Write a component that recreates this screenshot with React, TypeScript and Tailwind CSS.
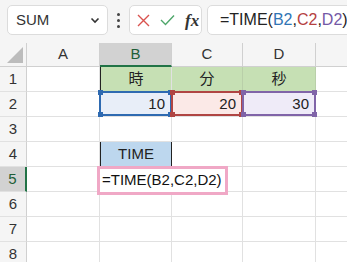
import React from 'react';

const font = { fontFamily: '"Liberation Sans", "Noto Sans CJK JP", sans-serif' };

const Corner = ({ pos, color }: { pos: string; color: string }) => (
  <div className={`absolute w-[5px] h-[5px] ${pos} ${color}`} />
);

const RangeBox = ({ border, fill }: { border: string; fill: string }) => (
  <div className={`absolute -left-[1px] -top-[1px] right-[-1px] bottom-0 border-2 ${border}`}>
    <Corner pos="-left-[3px] -top-[3px]" color={fill} />
    <Corner pos="-right-[3px] -top-[3px]" color={fill} />
    <Corner pos="-left-[3px] -bottom-[3px]" color={fill} />
    <Corner pos="-right-[3px] -bottom-[3px]" color={fill} />
  </div>
);

const Cell = ({ className = '', children }: { className?: string; children?: React.ReactNode }) => (
  <div className={`border-r border-b border-[#e1e1e1] flex items-center text-[15px] text-[#222] ${className}`}>{children}</div>
);

const RowHead = ({ n, active }: { n: number; active?: boolean }) => (
  <div
    className={`flex items-center justify-center text-[15px] border-b border-[#e1e1e1] ${
      active ? 'bg-[#d2d2d2] text-[#1e5e38] border-r-2 border-r-[#217346]' : 'bg-[#f5f5f5] text-[#333] border-r border-r-[#d0d0d0]'
    }`}
  >
    {n}
  </div>
);

export default function App() {
  return (
    <div className="w-[347px] h-[262px] overflow-hidden bg-[#f5f5f5] select-none" style={font}>
      {/* formula bar */}
      <div className="h-[43px] flex items-start pt-[5px] pl-[7px]">
        <div className="w-[101px] h-[30px] shrink-0 bg-white border border-[#dcdcdc] rounded-[5px] flex items-center justify-between pl-[8px] pr-[7px]">
          <span className="text-[15px] text-[#333]">SUM</span>
          <svg width="10" height="7" viewBox="0 0 10 7">
            <path d="M1.5 1.5 L5 5 L8.5 1.5" fill="none" stroke="#333" strokeWidth="1.6" />
          </svg>
        </div>
        <div className="w-[21px] h-[30px] shrink-0 flex flex-col items-center justify-center gap-[3px]">
          <div className="w-[3px] h-[3px] bg-[#444] rounded-full" />
          <div className="w-[3px] h-[3px] bg-[#444] rounded-full" />
          <div className="w-[3px] h-[3px] bg-[#444] rounded-full" />
        </div>
        <div className="w-[73px] h-[30px] shrink-0 bg-white border border-[#dcdcdc] rounded-[5px] flex items-center pl-[7px] gap-[10px]">
          <svg width="13" height="13" viewBox="0 0 13 13">
            <path d="M1 1 L12 12 M12 1 L1 12" stroke="#d9534f" strokeWidth="1.4" />
          </svg>
          <svg width="15" height="12" viewBox="0 0 15 12">
            <path d="M1 6 L5.5 10.5 L14 1.5" fill="none" stroke="#4ea66a" strokeWidth="1.4" />
          </svg>
          <span className="text-[17px] italic font-bold text-[#333] leading-none" style={{ fontFamily: '"Liberation Serif", serif' }}>
            fx
          </span>
        </div>
        <div className="ml-[5px] w-[160px] h-[30px] shrink-0 bg-white border border-[#dcdcdc] rounded-l-[5px] flex items-center pl-[12px] text-[16px] text-[#222] whitespace-nowrap">
          <span>=TIME(</span>
          <span className="text-[#2f75b5]">B2</span>
          <span>,</span>
          <span className="text-[#b5403f]">C2</span>
          <span>,</span>
          <span className="text-[#7458a6]">D2</span>
          <span>)</span>
          <span className="ml-[2px] w-[1px] h-[19px] bg-[#222]" />
        </div>
      </div>

      {/* sheet */}
      <div className="grid grid-cols-[27px_73px_72px_71px_73px_1fr] grid-rows-[24px_repeat(8,25px)] bg-white">
        {/* column headers */}
        <div className="bg-[#f5f5f5] border-r border-b border-[#d0d0d0] flex items-end justify-end pr-[3px] pb-[3px]">
          <svg width="16" height="16" viewBox="0 0 16 16">
            <path d="M16 0 L16 16 L0 16 Z" fill="#bcbcbc" />
          </svg>
        </div>
        <div className="bg-[#f5f5f5] border-r border-b border-[#d0d0d0] flex items-center justify-center text-[15px] text-[#333]">A</div>
        <div className="bg-[#d2d2d2] border-r border-[#d0d0d0] border-b-2 border-b-[#217346] flex items-center justify-center text-[15px] text-[#1e5e38]">B</div>
        <div className="bg-[#f5f5f5] border-r border-b border-[#d0d0d0] flex items-center justify-center text-[15px] text-[#333]">C</div>
        <div className="bg-[#f5f5f5] border-r border-b border-[#d0d0d0] flex items-center justify-center text-[15px] text-[#333]">D</div>
        <div className="bg-[#f5f5f5] border-b border-[#d0d0d0]" />

        {/* row 1 */}
        <RowHead n={1} />
        <Cell />
        <Cell className="bg-[#c6e0b4] border-l border-l-[#222] justify-center text-[14px]">時</Cell>
        <Cell className="bg-[#c6e0b4] border-r-[#b9cfa9] justify-center text-[14px]">分</Cell>
        <Cell className="bg-[#c6e0b4] border-r-[#b9cfa9] justify-center text-[14px]">秒</Cell>
        <Cell className="border-r-0" />

        {/* row 2 */}
        <RowHead n={2} />
        <Cell />
        <Cell className="relative bg-[#e8eef8] justify-end pr-[6px]">
          <RangeBox border="border-[#2e6ab1]" fill="bg-[#2e6ab1]" />
          <span className="relative">10</span>
        </Cell>
        <Cell className="relative bg-[#fbe9e7] justify-end pr-[6px]">
          <RangeBox border="border-[#b04543]" fill="bg-[#b04543]" />
          <span className="relative">20</span>
        </Cell>
        <Cell className="relative bg-[#efebf8] justify-end pr-[6px]">
          <RangeBox border="border-[#8064a8]" fill="bg-[#8064a8]" />
          <span className="relative">30</span>
        </Cell>
        <Cell className="border-r-0" />

        {/* row 3 */}
        <RowHead n={3} />
        <Cell />
        <Cell />
        <Cell />
        <Cell />
        <Cell className="border-r-0" />

        {/* row 4 */}
        <RowHead n={4} />
        <Cell />
        <Cell className="bg-[#bdd7ee] border-l border-l-[#222] border-r-[#222] justify-center text-[15px]">TIME</Cell>
        <Cell />
        <Cell />
        <Cell className="border-r-0" />

        {/* row 5 */}
        <RowHead n={5} active />
        <Cell />
        <Cell className="relative">
          <div className="absolute -left-[3px] -top-[1px] w-[131px] h-[29px] z-10 bg-white border-[3px] border-[#f0a8c6] flex items-center pl-[2px] text-[15px] text-[#111] whitespace-nowrap">
            =TIME(B2,C2,D2)
          </div>
        </Cell>
        <Cell />
        <Cell />
        <Cell className="border-r-0" />

        {[6, 7, 8].map(n => (
          <React.Fragment key={n}>
            <RowHead n={n} />
            <Cell />
            <Cell />
            <Cell />
            <Cell />
            <Cell className="border-r-0" />
          </React.Fragment>
        ))}
      </div>
    </div>
  );
}
